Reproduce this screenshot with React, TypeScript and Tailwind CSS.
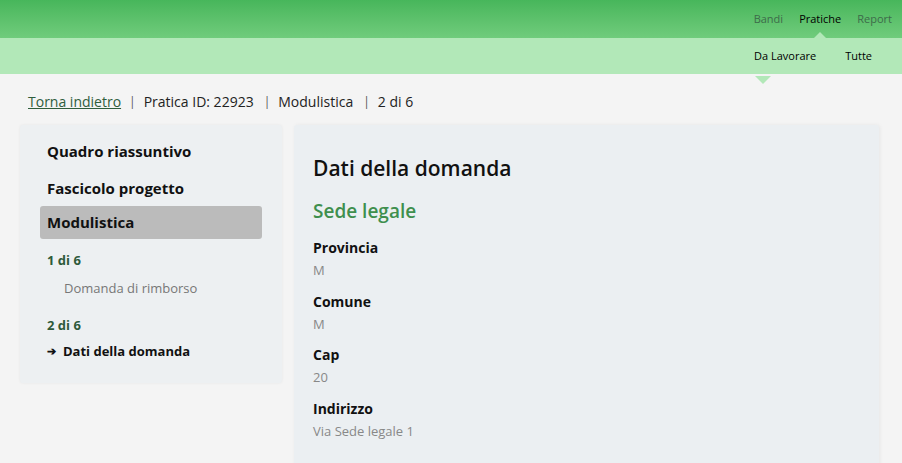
import React from "react";

const font = { fontFamily: '"Open Sans", "Liberation Sans", sans-serif' };

const fields = [
  { label: "Provincia", value: "M" },
  { label: "Comune", value: "M" },
  { label: "Cap", value: "20" },
  { label: "Indirizzo", value: "Via Sede legale 1" },
];

function TopNav() {
  return (
    <header>
      <div className="h-[38px] bg-gradient-to-b from-[#47b65b] to-[#70cc7c] flex justify-end items-center pr-[10px] gap-[16px] text-[11px]">
        <span className="text-[#3d6b4a]">Bandi</span>
        <span className="relative text-black">
          Pratiche
          <span className="absolute left-1/2 -translate-x-1/2 top-[21px] w-0 h-0 border-x-[8px] border-x-transparent border-b-[8px] border-b-[#b2e8b8]" />
        </span>
        <span className="text-[#3d6b4a]">Report</span>
      </div>
      <div className="h-[36px] bg-[#b2e8b8] flex justify-end items-center pr-[30px] gap-[29px] text-[11px] text-black">
        <span className="relative">
          Da Lavorare
          <span className="absolute left-[1px] top-[28px] w-0 h-0 border-x-[8px] border-x-transparent border-t-[8px] border-t-[#b2e8b8]" />
        </span>
        <span>Tutte</span>
      </div>
    </header>
  );
}

export default function App() {
  return (
    <div style={font} className="w-[902px] h-[463px] overflow-hidden bg-[#f4f4f4]">
      <TopNav />
      <div className="px-[28px] pt-[17px] pb-[13px] text-[14px] text-[#222] flex items-center gap-[8px]">
        <span className="underline text-[#2f5d3c]">Torna indietro</span>
        <span className="text-[#555] text-[12px]">|</span>
        <span>Pratica ID: 22923</span>
        <span className="text-[#555] text-[12px] ml-[2px]">|</span>
        <span>Modulistica</span>
        <span className="text-[#555] text-[12px] ml-[2px]">|</span>
        <span>2 di 6</span>
      </div>
      <div className="flex items-start gap-[12px] pl-[20px] pr-[23px]">
        <aside className="w-[262px] bg-[#edf0f2] rounded-[3px] shadow-[0_0_3px_rgba(0,0,0,0.06)] px-[20px] pt-[8px] pb-[22px]">
          <div className="font-bold text-[15px] text-[#111] py-[7px] px-[7px]">Quadro riassuntivo</div>
          <div className="font-bold text-[15px] text-[#111] py-[7px] px-[7px]">Fascicolo progetto</div>
          <div className="font-bold text-[15px] text-[#111] py-[5px] px-[7px] bg-[#bbbbbb] rounded-[3px] h-[33px]">Modulistica</div>
          <div className="px-[7px] mt-[12px]">
            <div className="font-bold text-[13px] text-[#2e5a3a]">1 di 6</div>
            <div className="text-[13px] text-[#777] pl-[17px] mt-[8px]">Domanda di rimborso</div>
            <div className="font-bold text-[13px] text-[#2e5a3a] mt-[18px]">2 di 6</div>
            <div className="flex items-center gap-[7px] mt-[6px] text-[13px] font-bold text-[#111]">
              <span className="text-[11px]">➔</span>
              <span>Dati della domanda</span>
            </div>
          </div>
        </aside>
        <main className="flex-1 h-[360px] bg-[#ebeff2] rounded-[3px] shadow-[1px_0_4px_rgba(0,0,0,0.06)] px-[19px] pt-[28px]">
          <h1 className="text-[21px] font-semibold text-[#111]">Dati della domanda</h1>
          <h2 className="text-[19px] font-semibold text-[#3f8f4e] mt-[12px]">Sede legale</h2>
          <div className="mt-[12px] flex flex-col gap-[10px]">
            {fields.map((f) => (
              <div key={f.label}>
                <div className="font-bold text-[14px] text-[#111]">{f.label}</div>
                <div className="text-[13px] text-[#888] mt-[3px]">{f.value}</div>
              </div>
            ))}
          </div>
        </main>
      </div>
    </div>
  );
}
